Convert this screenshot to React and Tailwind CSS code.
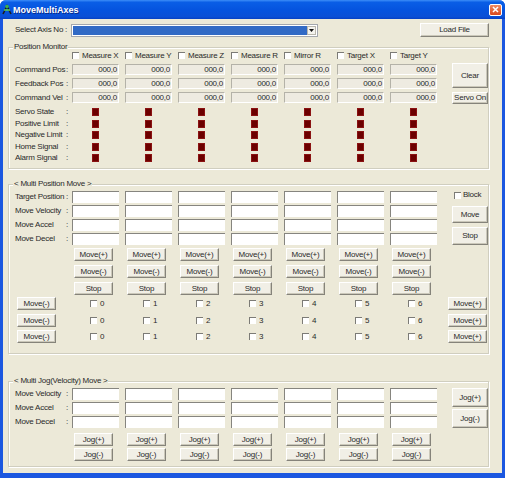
import React from 'react';

const COLS = [0, 1, 2, 3, 4, 5, 6];
const MEASURES = ['Measure X', 'Measure Y', 'Measure Z', 'Measure R', 'Mirror R', 'Target X', 'Target Y'];
const LED_ROWS = [
  { label: 'Servo State', mt: 'mt-[5px]' },
  { label: 'Positive Limit', mt: 'mt-[4px]' },
  { label: 'Negative Limit', mt: 'mt-[3px]' },
  { label: 'Home Signal', mt: 'mt-[4px]' },
  { label: 'Alarm Signal', mt: 'mt-[3px]' },
];

function Btn({ children, className = '' }) {
  return (
    <button
      type="button"
      className={`flex items-center justify-center whitespace-nowrap bg-[#f1efe6] border border-t-white border-l-white border-r-[#85837a] border-b-[#85837a] shadow-[inset_-1px_-1px_0_#cbc8ba] leading-none text-[#2a2a2a] ${className}`}
    >
      {children}
    </button>
  );
}

const Check = () => (
  <span className="block w-[7px] h-[7px] bg-white border-t border-l border-t-[#7c7b76] border-l-[#7c7b76]" />
);

const Edit = () => (
  <div className="w-[47px] h-[12px] bg-white border-t border-l border-t-[#86857f] border-l-[#86857f]" />
);

const ReadOnly = () => (
  <div className="w-[47px] h-[11px] flex items-center justify-end pr-[1px] bg-[#eeebe1] border border-t-[#b4b2a8] border-l-[#b4b2a8] border-b-white border-r-white">
    000,0
  </div>
);

const Label = ({ text }) => (
  <div className="w-[53px] mr-[4px] flex justify-between whitespace-nowrap">
    <span>{text}</span>
    <span>:</span>
  </div>
);

function Group({ title, className = '', children }) {
  return (
    <fieldset className={`w-[481px] border border-[#d0cebf] shadow-[inset_1px_1px_0_#fff,1px_1px_0_#fff] ${className}`}>
      <legend className="ml-[4px] px-[1px] leading-[10px] bg-[#ece9d8]">{title}</legend>
      {children}
    </fieldset>
  );
}

const EditRow = ({ label, className = '' }) => (
  <div className={`flex items-center h-[12px] ${className}`}>
    <Label text={label} />
    <div className="flex gap-[6px]">
      {COLS.map((c) => <Edit key={c} />)}
    </div>
  </div>
);

const ButtonRow = ({ text, className = '' }) => (
  <div className={`flex h-[13px] pl-[57px] gap-[6px] ${className}`}>
    {COLS.map((c) => (
      <div key={c} className="w-[47px]">
        <Btn className="ml-[2px] w-[39px] h-[13px]">{text}</Btn>
      </div>
    ))}
  </div>
);

const CheckRow = ({ className = '' }) => (
  <div className={`flex items-center h-[13px] ${className}`}>
    <div className="w-[53px] mr-[4px]">
      <Btn className="ml-[2px] w-[39px] h-[13px]">Move(-)</Btn>
    </div>
    <div className="flex gap-[6px]">
      {COLS.map((c) => (
        <div key={c} className="w-[47px] flex items-center pl-[18px] gap-[3px]">
          <Check />
          <span>{c}</span>
        </div>
      ))}
    </div>
    <Btn className="ml-[11px] w-[39px] h-[13px]">Move(+)</Btn>
  </div>
);

function TitleIcon() {
  return (
    <svg width="10" height="11" viewBox="0 0 10 11">
      <path d="M1 10 L5 2 L9 10" stroke="#1d1d1d" strokeWidth="1.6" fill="none" />
      <circle cx="5" cy="2.5" r="1.8" fill="#3fae49" />
      <path d="M2 6 H8" stroke="#5ccf5a" strokeWidth="1.4" />
    </svg>
  );
}

export default function App() {
  return (
    <div className="w-[505px] h-[478px] flex flex-col bg-[#1b57e0] rounded-t-[6px] overflow-hidden font-['Liberation_Sans',Arial,sans-serif] text-[8px] tracking-[-0.25px] leading-[10px] text-[#2a2a2a]">
      {/* title bar */}
      <div className="h-[19px] flex items-center pl-[2px] pr-[3px] bg-[linear-gradient(180deg,#3d8ef8_0%,#0a5ee6_12%,#0553de_55%,#0a4fd6_88%,#0640c4_100%)]">
        <TitleIcon />
        <span className="ml-[1px] text-white font-bold text-[9px] tracking-normal [text-shadow:1px_1px_0_#0a2a8a]">
          MoveMultiAxes
        </span>
        <div className="ml-auto w-[13px] h-[12px] rounded-[2px] border border-white bg-[linear-gradient(180deg,#f08a63,#d9481e)] flex items-center justify-center">
          <svg width="7" height="7" viewBox="0 0 7 7">
            <path d="M1 1 L6 6 M6 1 L1 6" stroke="#fff" strokeWidth="1.5" />
          </svg>
        </div>
      </div>

      {/* body */}
      <div className="flex-1 mx-[3px] mb-[5px] bg-[#ece9d8] pl-[5px] pt-[4px]">
        {/* axis select */}
        <div className="flex items-center h-[14px] w-[481px] pl-[7px]">
          <span className="w-[56px] whitespace-nowrap">Select Axis No :</span>
          <div className="w-[247px] h-[13px] border border-[#a3a7ad] bg-white p-[1px] flex">
            <div className="flex-1 bg-[#316ac5]" />
            <div className="w-[9px] bg-[#f4f3ee] border border-[#b9b7ad] flex items-center justify-center">
              <svg width="5" height="3" viewBox="0 0 5 3">
                <path d="M0 0 H5 L2.5 3 Z" fill="#111" />
              </svg>
            </div>
          </div>
          <Btn className="ml-auto w-[69px] h-[14px]">Load File</Btn>
        </div>

        {/* Position Monitor */}
        <Group title="Position Monitor" className="mt-[5px] h-[127px]">
          <div className="flex pl-[6px]">
            <div className="w-[422px]">
              <div className="flex items-center h-[9px] -mt-[1px] pl-[57px] gap-[6px]">
                {MEASURES.map((m) => (
                  <div key={m} className="w-[47px] flex items-center gap-[3px] whitespace-nowrap">
                    <Check />
                    <span>{m}</span>
                  </div>
                ))}
              </div>
              {['Command Pos', 'Feedback Pos', 'Command Vel'].map((l, i) => (
                <div key={l} className={`flex items-center h-[11px] ${i === 0 ? 'mt-[4px]' : 'mt-[3px]'}`}>
                  <Label text={l} />
                  <div className="flex gap-[6px]">
                    {COLS.map((c) => <ReadOnly key={c} />)}
                  </div>
                </div>
              ))}
              {LED_ROWS.map((r) => (
                <div key={r.label} className={`flex items-center h-[8px] ${r.mt}`}>
                  <Label text={r.label} />
                  <div className="flex gap-[6px]">
                    {COLS.map((c) => (
                      <div key={c} className="w-[47px] pl-[20px]">
                        <div className="w-[7px] h-[8px] bg-[#6c0000] border border-[#8a1212]" />
                      </div>
                    ))}
                  </div>
                </div>
              ))}
            </div>
            <div className="ml-[15px] w-[36px] flex flex-col">
              <Btn className="mt-[11px] h-[25px]">Clear</Btn>
              <Btn className="mt-[4px] h-[12px]">Servo On</Btn>
            </div>
          </div>
        </Group>

        {/* Multi Position Move */}
        <Group title="< Multi Position Move >" className="mt-[10px] h-[175px]">
          <div className="pl-[6px]">
            <div className="flex">
              <div className="w-[422px]">
                <EditRow label="Target Position" className="mt-[2px]" />
                <EditRow label="Move Velocity" className="mt-[2px]" />
                <EditRow label="Move Accel" className="mt-[2px]" />
                <EditRow label="Move Decel" className="mt-[2px]" />
                <ButtonRow text="Move(+)" className="mt-[3px]" />
                <ButtonRow text="Move(-)" className="mt-[4px]" />
                <ButtonRow text="Stop" className="mt-[4px]" />
              </div>
              <div className="ml-[15px] w-[36px] flex flex-col">
                <div className="mt-[2px] h-[8px] flex items-center pl-[2px] gap-[2px]">
                  <Check />
                  <span>Block</span>
                </div>
                <Btn className="mt-[7px] h-[17px]">Move</Btn>
                <Btn className="mt-[4px] h-[18px]">Stop</Btn>
              </div>
            </div>
            <CheckRow className="mt-[2px]" />
            <CheckRow className="mt-[4px]" />
            <CheckRow className="mt-[3px]" />
          </div>
        </Group>

        {/* Multi Jog */}
        <Group title="< Multi Jog(Velocity) Move >" className="mt-[22px] h-[91px]">
          <div className="flex pl-[6px]">
            <div className="w-[422px]">
              <EditRow label="Move Velocity" className="mt-[2px]" />
              <EditRow label="Move Accel" className="mt-[2px]" />
              <EditRow label="Move Decel" className="mt-[2px]" />
              <ButtonRow text="Jog(+)" className="mt-[5px]" />
              <ButtonRow text="Jog(-)" className="mt-[2px]" />
            </div>
            <div className="ml-[15px] w-[36px] flex flex-col">
              <Btn className="mt-[2px] h-[19px]">Jog(+)</Btn>
              <Btn className="mt-[2px] h-[19px]">Jog(-)</Btn>
            </div>
          </div>
        </Group>
      </div>
    </div>
  );
}
